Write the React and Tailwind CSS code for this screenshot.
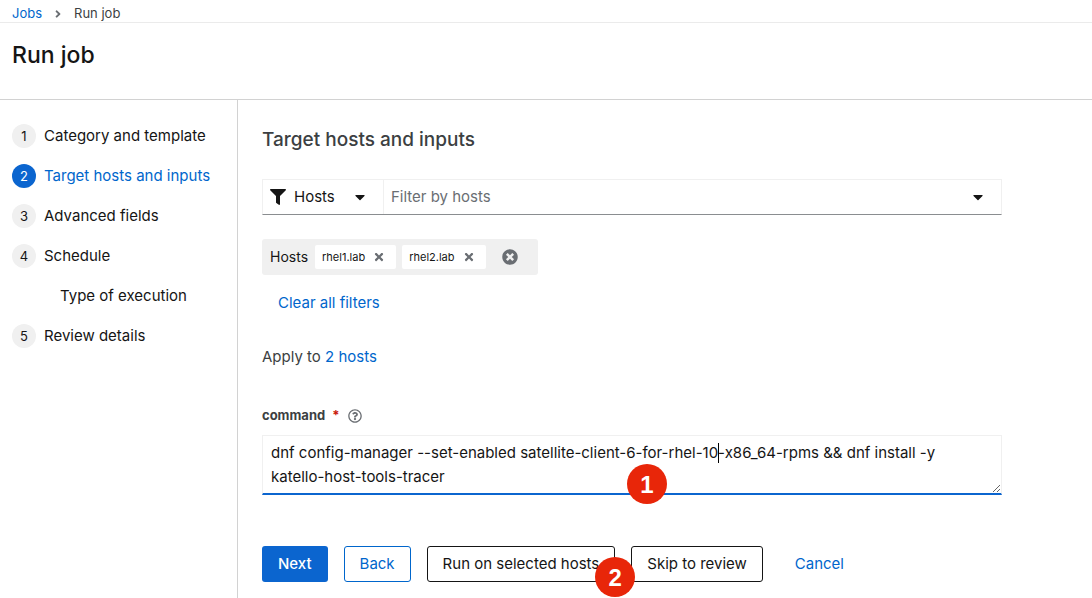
import {
  FaAngleRight,
  FaCaretDown,
  FaFilter,
  FaRegQuestionCircle,
  FaTimes,
  FaTimesCircle,
} from "react-icons/fa";

const steps = [
  { number: 1, label: "Category and template" },
  { number: 2, label: "Target hosts and inputs", current: true },
  { number: 3, label: "Advanced fields" },
  { number: 4, label: "Schedule", children: ["Type of execution"] },
  { number: 5, label: "Review details" },
];

const command =
  "dnf config-manager --set-enabled satellite-client-6-for-rhel-10-x86_64-rpms && dnf install -y katello-host-tools-tracer";

function Step({ number, label, current, children }) {
  return (
    <li className="flex flex-col gap-4">
      <button
        type="button"
        aria-current={current ? "step" : undefined}
        className={`flex items-center gap-2 whitespace-nowrap text-left leading-6 ${current ? "text-[#0066cc]" : ""}`}
      >
        <span
          className={`flex size-6 items-center justify-center rounded-full text-[13px] ${current ? "bg-[#0b65cf] text-white" : "bg-[#f0f0f0]"}`}
        >
          {number}
        </span>
        {label}
      </button>
      {children && (
        <ul>
          {children.map((child) => (
            <li key={child} className="pl-12">
              <button type="button" className="block leading-6">
                {child}
              </button>
            </li>
          ))}
        </ul>
      )}
    </li>
  );
}

function Chip({ name }) {
  return (
    <li className="flex h-6 items-center gap-2 rounded-xs bg-white pr-[11px] pl-[7px] text-[11px]">
      {name}
      <button type="button" aria-label={`Remove ${name}`} className="text-[#6a6e73]">
        <FaTimes className="size-3" />
      </button>
    </li>
  );
}

function Marker({ children, className }) {
  return (
    <span
      className={`absolute flex size-10 items-center justify-center rounded-full bg-[#e82609] pt-0.5 font-['Liberation_Sans',sans-serif] text-2xl font-bold text-white ${className}`}
    >
      {children}
    </span>
  );
}

export default function App() {
  return (
    <div className="flex min-h-screen flex-col bg-white font-['Inter',sans-serif] text-[15px] text-[#151515]">
      <nav aria-label="Breadcrumb" className="border-b border-[#ebebeb] px-3 pt-[5px] text-[13px] leading-[17px]">
        <ol className="flex items-center gap-2.5">
          <li>
            <a href="#jobs" className="text-[#0066cc]">Jobs</a>
          </li>
          <li className="flex items-center gap-2.5 text-[#3c3f42]">
            <FaAngleRight className="size-3 text-[#6a6e73]" />
            Run job
          </li>
        </ol>
      </nav>

      <header className="border-b border-[#d2d2d2] px-3 pt-4 pb-7">
        <h1 className="text-[23px] leading-8 font-medium">Run job</h1>
      </header>

      <div className="flex flex-1">
        <nav aria-label="Steps" className="w-[238px] shrink-0 border-r border-[#d2d2d2] px-3 pt-6">
          <ol className="flex flex-col gap-4">
            {steps.map((step) => (
              <Step key={step.number} {...step} />
            ))}
          </ol>
        </nav>

        <main className="min-w-0 flex-1 pt-6 pr-[90px] pb-4 pl-6">
          <h2 className="text-[19px] leading-8 font-medium text-[#3c3f42]">Target hosts and inputs</h2>

          <div className="mt-[23px] flex h-9 border border-[#f0f0f0] border-b-[#8a8d90]">
            <button type="button" className="flex w-[121px] items-center border-r border-[#f0f0f0] pl-[7px]">
              <FaFilter className="size-4" />
              <span className="ml-2 flex-1 text-left">Hosts</span>
              <FaCaretDown className="mr-[15px] size-4" />
            </button>
            <input
              type="text"
              aria-label="Filter by hosts"
              placeholder="Filter by hosts"
              className="min-w-0 flex-1 px-[7px] outline-none placeholder:text-[#6a6e73]"
            />
            <button type="button" aria-label="Show hosts" className="px-[15px]">
              <FaCaretDown className="size-4" />
            </button>
          </div>

          <div className="mt-6 flex h-9 w-fit items-center rounded-[3px] bg-[#f0f0f0] pr-5 pl-2">
            <span id="chips" className="mr-[7px] text-sm">Hosts</span>
            <ul aria-labelledby="chips" className="flex gap-1.5">
              <Chip name="rhel1.lab" />
              <Chip name="rhel2.lab" />
            </ul>
            <button type="button" aria-label="Remove all hosts" className="ml-4 text-[#6a6e73]">
              <FaTimesCircle className="size-4" />
            </button>
          </div>

          <button type="button" className="mt-4 block px-4 leading-6 text-[#0066cc]">Clear all filters</button>

          <p className="mt-[30px] leading-6 text-[#3c3f42]">
            Apply to <a href="#hosts" className="text-[#0066cc]">2 hosts</a>
          </p>

          <div className="mt-9 flex items-center gap-2 text-[13px] leading-[21px] text-[#3c3f42]">
            <label htmlFor="command" className="font-bold">
              command <span aria-hidden="true" className="ml-1 text-[#c9190b]">*</span>
            </label>
            <button type="button" aria-label="Help for command" className="text-[#6a6e73]">
              <FaRegQuestionCircle className="size-3.5" />
            </button>
          </div>
          <div className="relative mt-[9px]">
            <textarea
              id="command"
              rows={2}
              defaultValue={command}
              spellCheck={false}
              className="block h-[60px] w-full resize-y border border-b-2 border-[#f0f0f0] border-b-[#0b65cf] py-[5px] pr-6 pl-2 leading-6 outline-none"
            />
            <span aria-hidden="true" className="absolute top-2 left-[456px] h-5 w-px bg-black" />
            <Marker className="top-[29px] left-[365px]">1</Marker>
          </div>

          <div className="mt-[51px] flex gap-4 whitespace-nowrap leading-6">
            <button type="button" className="h-9 rounded-[3px] bg-[#0b65cf] px-4 font-medium text-white">Next</button>
            <button type="button" className="h-9 rounded-[3px] border border-[#0066cc] px-[15px] text-[#0066cc]">Back</button>
            <div className="relative">
              <button type="button" className="h-9 rounded-[3px] border border-[#151515] px-[15px]">Run on selected hosts</button>
              <Marker className="top-[11px] -right-5">2</Marker>
            </div>
            <button type="button" className="h-9 rounded-[3px] border border-[#151515] px-[15px]">Skip to review</button>
            <button type="button" className="h-9 px-4 text-[#0066cc]">Cancel</button>
          </div>
        </main>
      </div>
    </div>
  );
}
